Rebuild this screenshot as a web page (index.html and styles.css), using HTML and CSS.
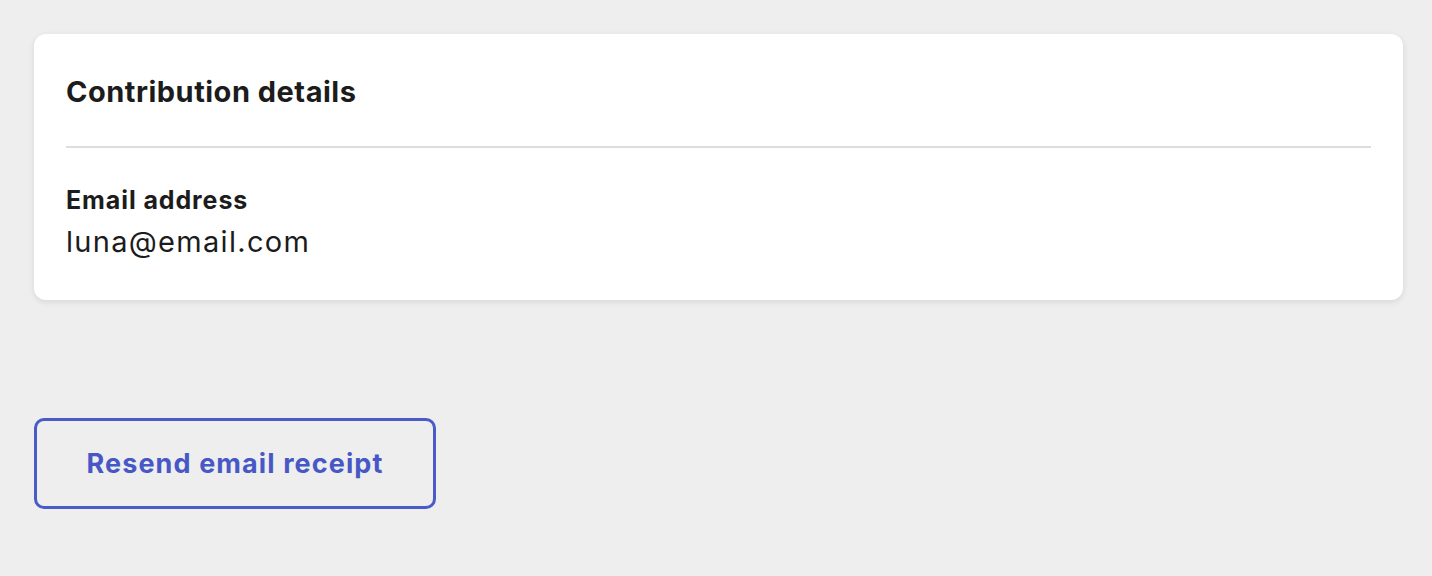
FILE: index.html
```html
<!DOCTYPE html>
<html lang="en">

<head>
    <meta charset="UTF-8">
    <meta name="viewport" content="width=device-width, initial-scale=1.0">
    <title>Contribution details</title>
    <link rel="stylesheet" href="styles.css">
</head>

<body>
    <div class="page">
        <div class="card">
            <h2 class="card-title">Contribution details</h2>
            <div class="card-body">
                <div class="field-label">Email address</div>
                <div class="field-value">luna@email.com</div>
            </div>
        </div>

        <button class="btn-outline">Resend email receipt</button>
    </div>
</body>

</html>
```

FILE: styles.css
```css
body {
    margin: 0;
    background-color: #eeeeee;
    font-family: Inter, Lato, sans-serif;
    color: #1c1c1c;
}

.page {
    padding: 34px 29px 34px 34px;
}

.card {
    background-color: #fff;
    border-radius: 12px;
    box-shadow: 0 2px 6px rgba(0, 0, 0, 0.1);
    padding: 0 32px;
}

.card-title {
    margin: 0;
    padding: 39px 0 35px;
    font-size: 29px;
    font-weight: 700;
    line-height: 38px;
    letter-spacing: 0.5px;
    border-bottom: 2px solid #dddddd;
}

.card-body {
    padding: 36px 0 38px;
}

.field-label {
    font-size: 25px;
    font-weight: 700;
    line-height: 32px;
    letter-spacing: 0.9px;
}

.field-value {
    font-size: 29px;
    line-height: 40px;
    margin-top: 6px;
    letter-spacing: 1.3px;
}

.btn-outline {
    margin-top: 118px;
    width: 402px;
    height: 91px;
    background: transparent;
    border: 3px solid #4a5bc8;
    border-radius: 10px;
    color: #4758c6;
    font-family: inherit;
    font-size: 27px;
    font-weight: 700;
    letter-spacing: 1.1px;
    cursor: pointer;
}
```
